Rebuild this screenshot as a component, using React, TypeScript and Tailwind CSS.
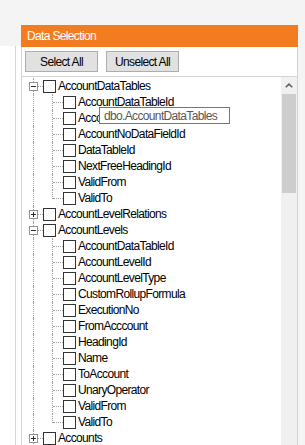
import React from 'react';

type Node = { name: string; level: 0 | 1; exp?: '+' | '-'; last?: boolean };

const rows: Node[] = [
  { name: 'AccountDataTables', level: 0, exp: '-' },
  { name: 'AccountDataTableId', level: 1 },
  { name: 'AccountId', level: 1 },
  { name: 'AccountNoDataFieldId', level: 1 },
  { name: 'DataTableId', level: 1 },
  { name: 'NextFreeHeadingId', level: 1 },
  { name: 'ValidFrom', level: 1 },
  { name: 'ValidTo', level: 1, last: true },
  { name: 'AccountLevelRelations', level: 0, exp: '+' },
  { name: 'AccountLevels', level: 0, exp: '-' },
  { name: 'AccountDataTableId', level: 1 },
  { name: 'AccountLevelId', level: 1 },
  { name: 'AccountLevelType', level: 1 },
  { name: 'CustomRollupFormula', level: 1 },
  { name: 'ExecutionNo', level: 1 },
  { name: 'FromAcccount', level: 1 },
  { name: 'HeadingId', level: 1 },
  { name: 'Name', level: 1 },
  { name: 'ToAccount', level: 1 },
  { name: 'UnaryOperator', level: 1 },
  { name: 'ValidFrom', level: 1 },
  { name: 'ValidTo', level: 1, last: true },
  { name: 'Accounts', level: 0, exp: '+' },
];

function Row({ n }: { n: Node }) {
  return (
    <div className="relative flex h-4 shrink-0 items-center">
      <div className="relative h-4 w-[21px] shrink-0">
        <span className="absolute left-[11px] top-0 h-4 border-l border-dotted border-[#a0a0a0]" />
        {n.level === 0 && (
          <>
            <span className="absolute left-[16px] top-[8px] w-[5px] border-t border-dotted border-[#a0a0a0]" />
            <span className="absolute left-[7px] top-[4px] h-[9px] w-[9px] border border-[#939393] bg-white">
              <span className="absolute left-[1px] top-[3px] h-px w-[5px] bg-[#2b2b2b]" />
              {n.exp === '+' && <span className="absolute left-[3px] top-[1px] h-[5px] w-px bg-[#2b2b2b]" />}
            </span>
          </>
        )}
      </div>
      {n.level === 1 && (
        <div className="relative h-4 w-[20px] shrink-0">
          <span
            className={
              n.last
                ? 'absolute left-[9px] top-0 h-[9px] border-l border-dotted border-[#a0a0a0]'
                : 'absolute left-[9px] top-0 h-4 border-l border-dotted border-[#a0a0a0]'
            }
          />
          <span className="absolute left-[10px] top-[8px] w-[10px] border-t border-dotted border-[#a0a0a0]" />
        </div>
      )}
      <span className="h-[13px] w-[13px] shrink-0 border border-[#333333] bg-white" />
      <span className="ml-[2px] whitespace-nowrap text-[12px] leading-4 tracking-[-0.65px] text-black">{n.name}</span>
    </div>
  );
}

export default function App() {
  return (
    <div className="flex h-[445px] w-[305px] flex-col overflow-hidden bg-[#f4f4f4] font-['Liberation_Sans',Arial,sans-serif]">
      <div className="h-[25px] shrink-0" />
      <div className="flex min-h-0 flex-1">
        <div className="flex w-[21px] shrink-0 flex-col">
          <div className="h-[21px] shrink-0" />
          <div className="flex-1 bg-white">
            <div className="h-full w-[16px] border-r border-[#d6d6d6]" />
          </div>
        </div>
        <div className="flex w-[277px] shrink-0 flex-col border-x border-[#d4d4d4] bg-white">
          <div className="-mx-px flex h-[22px] shrink-0 items-center bg-[#f47c20] pl-[6px]">
            <span className="text-[12px] tracking-[-0.65px] text-white">Data Selection</span>
          </div>
          <div className="flex h-[30px] shrink-0 items-start gap-[8px] border-b border-[#d4d4d4] pl-[3px] pt-[4px]">
            <button className="flex h-[21px] w-[73px] items-center justify-center border border-[#adadad] bg-[#e1e1e1] text-[12px] tracking-[-0.65px] text-black">
              Select All
            </button>
            <button className="flex h-[21px] w-[73px] items-center justify-center border border-[#adadad] bg-[#e1e1e1] text-[12px] tracking-[-0.65px] text-black">
              Unselect All
            </button>
          </div>
          <div className="flex min-h-0 flex-1">
            <div className="relative flex min-w-0 flex-1 flex-col overflow-hidden pt-px">
              {rows.map((n, i) => (
                <Row key={i} n={n} />
              ))}
              <div className="absolute left-[77px] top-[30px] flex h-[17px] w-[131px] items-center border border-[#767676] bg-white pl-[4px]">
                <span className="whitespace-nowrap text-[12px] tracking-[-0.65px] text-[#575757]">dbo.AccountDataTables</span>
              </div>
            </div>
            <div className="flex w-[16px] shrink-0 flex-col bg-[#f0f0f0]">
              <div className="flex h-[17px] shrink-0 items-center justify-center">
                <svg width="8" height="5" viewBox="0 0 8 5">
                  <polyline points="0.8,4.3 4,1.2 7.2,4.3" fill="none" stroke="#606060" strokeWidth="1.6" />
                </svg>
              </div>
              <div className="mx-px h-[99px] shrink-0 bg-[#cdcdcd]" />
            </div>
          </div>
        </div>
        <div className="w-[7px] shrink-0" />
      </div>
    </div>
  );
}
